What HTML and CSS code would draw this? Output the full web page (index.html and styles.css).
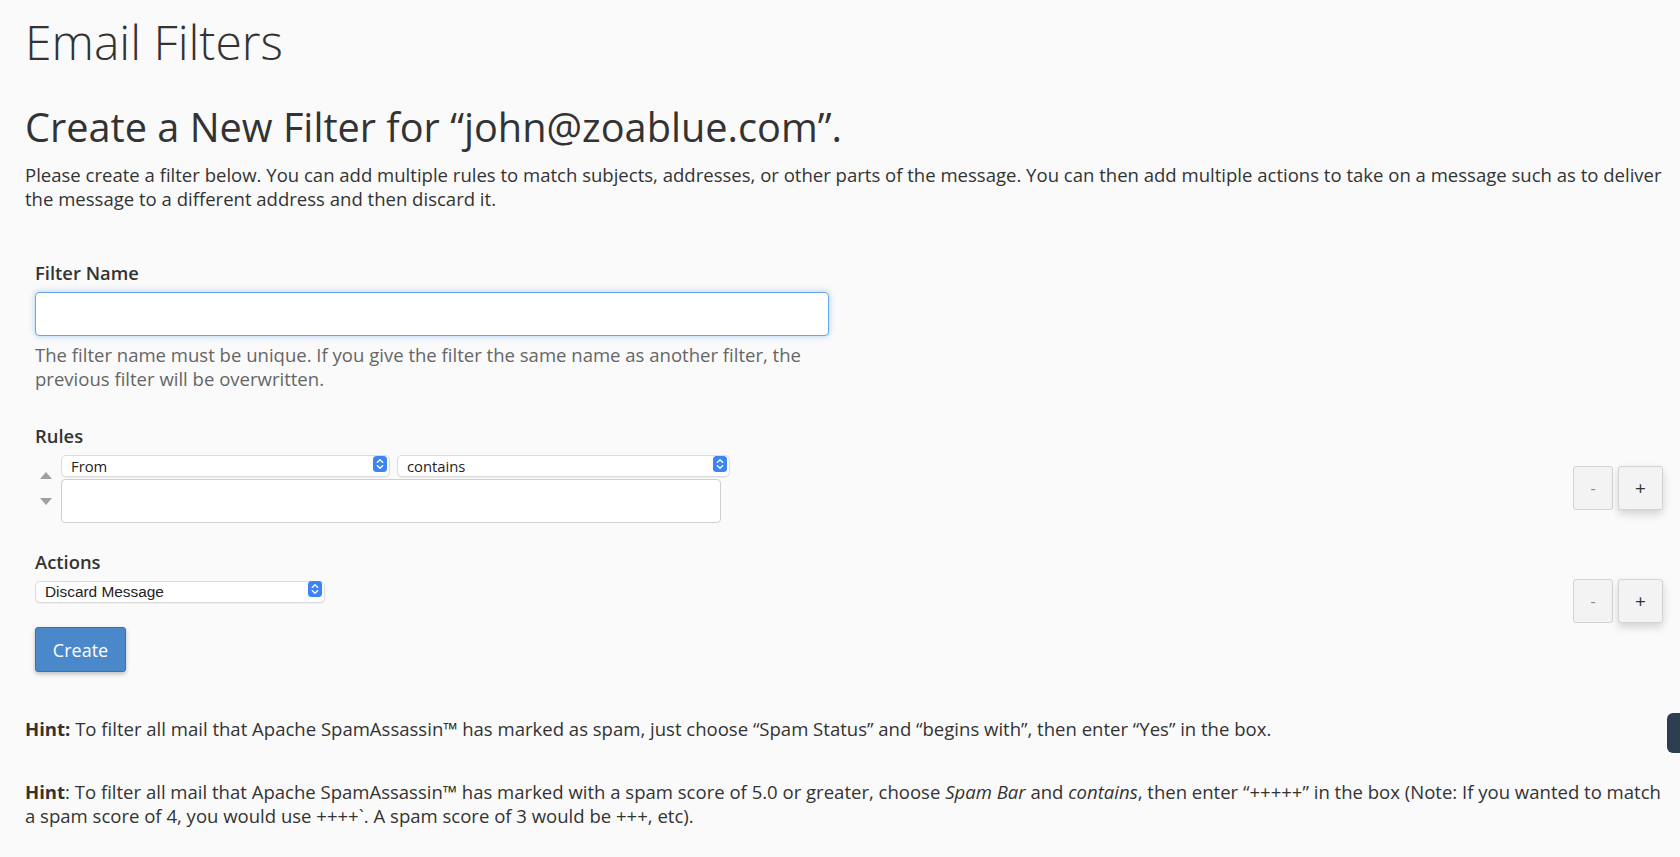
FILE: index.html
```html
<!DOCTYPE html>
<html lang="en">
<head>
<meta charset="utf-8">
<title>Email Filters</title>
<link rel="stylesheet" href="styles.css">
</head>
<body>
<div class="page">
  <h1 class="page-title">Email Filters</h1>
  <h2 class="sub-title">Create a New Filter for “john@zoablue.com”.</h2>
  <p class="intro">Please create a filter below. You can add multiple rules to match subjects, addresses, or other parts of the message. You can then add multiple actions to take on a message such as to deliver the message to a different address and then discard it.</p>

  <form class="filter-form">
    <div class="field name-field">
      <label class="field-label" for="filtername">Filter Name</label>
      <input class="text-input" id="filtername" type="text">
      <p class="help">The filter name must be unique. If you give the filter the same name as another filter, the previous filter will be overwritten.</p>
    </div>

    <div class="field rules-field">
      <div class="field-label">Rules</div>
      <div class="rule-row">
        <div class="move">
          <span class="tri up"></span>
          <span class="tri down"></span>
        </div>
        <div class="rule-body">
          <div class="rule-selects">
            <div class="select sel-part">
              <select><option>From</option></select>
              <span class="stepper"><svg viewBox="0 0 14 16" width="14" height="16"><rect width="14" height="16" rx="3.5" fill="#3c84f4"/><path d="M4.2 6.4 7 3.8l2.8 2.6M4.2 9.6 7 12.2l2.8-2.6" fill="none" stroke="#fff" stroke-width="1.3" stroke-linecap="round" stroke-linejoin="round"/></svg></span>
            </div>
            <div class="select sel-match">
              <select><option>contains</option></select>
              <span class="stepper"><svg viewBox="0 0 14 16" width="14" height="16"><rect width="14" height="16" rx="3.5" fill="#3c84f4"/><path d="M4.2 6.4 7 3.8l2.8 2.6M4.2 9.6 7 12.2l2.8-2.6" fill="none" stroke="#fff" stroke-width="1.3" stroke-linecap="round" stroke-linejoin="round"/></svg></span>
            </div>
          </div>
          <textarea class="rule-value"></textarea>
        </div>
        <div class="pm">
          <button type="button" class="pm-btn minus">-</button>
          <button type="button" class="pm-btn plus">+</button>
        </div>
      </div>
    </div>

    <div class="field actions-field">
      <div class="field-label">Actions</div>
      <div class="action-row">
        <div class="select sel-action">
          <select><option>Discard Message</option></select>
          <span class="stepper"><svg viewBox="0 0 14 16" width="14" height="16"><rect width="14" height="16" rx="3.5" fill="#3c84f4"/><path d="M4.2 6.4 7 3.8l2.8 2.6M4.2 9.6 7 12.2l2.8-2.6" fill="none" stroke="#fff" stroke-width="1.3" stroke-linecap="round" stroke-linejoin="round"/></svg></span>
        </div>
        <div class="pm pm-action">
          <button type="button" class="pm-btn minus">-</button>
          <button type="button" class="pm-btn plus">+</button>
        </div>
      </div>
    </div>

    <button type="button" class="create-btn">Create</button>
  </form>

  <p class="hint hint-1"><strong>Hint:</strong> To filter all mail that Apache SpamAssassin™ has marked as spam, just choose “Spam Status” and “begins with”, then enter “Yes” in the box.</p>
  <p class="hint hint-2"><strong>Hint</strong>: To filter all mail that Apache SpamAssassin™ has marked with a spam score of 5.0 or greater, choose <em>Spam Bar</em> and <em>contains</em>, then enter “+++++” in the box (Note: If you wanted to match a spam score of 4, you would use ++++`. A spam score of 3 would be +++, etc).</p>
</div>
<div class="side-tab"></div>
</body>
</html>
```

FILE: styles.css
```css
* { box-sizing: border-box; }

html, body {
  margin: 0;
  padding: 0;
  background: #fafafa;
}

body {
  font-family: "Open Sans", "Liberation Sans", sans-serif;
  font-size: 18.55px;
  line-height: 24px;
  color: #333;
  overflow: hidden;
  position: relative;
  min-height: 857px;
}

.page {
  padding: 0 17px 0 25px;
}

.page-title {
  margin: 15px 0 0;
  font-size: 48px;
  line-height: 53px;
  font-weight: 300;
  color: #333;
}

.sub-title {
  margin: 37px 0 0;
  font-size: 39.7px;
  line-height: 44px;
  font-weight: 400;
  color: #333;
}

.intro {
  margin: 14px 0 0;
}

.filter-form {
  padding-left: 10px;
}

.field-label {
  display: block;
  font-weight: 600;
  font-size: 18.4px;
  line-height: 24px;
}

.name-field {
  margin-top: 50px;
  width: 794px;
}

.text-input {
  display: block;
  margin-top: 7px;
  width: 794px;
  height: 44px;
  border: 1px solid #66a7ee;
  border-radius: 4px;
  background: #fff;
  box-shadow: 0 0 6px rgba(102, 170, 238, 0.55);
  outline: none;
  font: inherit;
}

.help {
  margin: 7px 0 0;
  color: #666;
}

.rules-field {
  margin-top: 33px;
}

.rule-row {
  margin-top: 5px;
  display: flex;
  align-items: center;
}

.move {
  width: 26px;
  display: flex;
  flex-direction: column;
  align-items: center;
  gap: 19px;
  padding-right: 4px;
}

.tri {
  width: 0;
  height: 0;
  border-left: 6px solid transparent;
  border-right: 6px solid transparent;
}
.tri.up { border-bottom: 7px solid #a0a0a0; }
.tri.down { border-top: 7px solid #a0a0a0; }

.rule-body {
  display: flex;
  flex-direction: column;
  gap: 4px;
}

.rule-selects {
  display: flex;
  gap: 7px;
}

.select {
  position: relative;
  height: 22px;
}

.select select {
  -webkit-appearance: none;
  appearance: none;
  width: 100%;
  height: 22px;
  margin: 0;
  padding: 0 24px 0 9px;
  border: 1px solid #dcdcdc;
  border-radius: 5px;
  background: #fff;
  box-shadow: 0 1px 1px rgba(0, 0, 0, 0.06);
  font-family: "Open Sans", "Liberation Sans", sans-serif;
  font-size: 14.8px;
  line-height: 20px;
  color: #222;
}

.stepper {
  position: absolute;
  right: 3px;
  top: 3px;
  width: 14px;
  height: 16px;
  pointer-events: none;
  display: flex;
}

.sel-part { width: 329px; }
.sel-match { width: 333px; }

.rule-value {
  display: block;
  width: 660px;
  height: 44px;
  border: 1px solid #cfcfcf;
  border-radius: 4px;
  background: #fff;
  resize: none;
  margin: 0;
}

.pm {
  margin-left: auto;
  display: flex;
  gap: 5px;
}

.pm-btn {
  height: 44px;
  border: 1px solid #d3d3d3;
  border-radius: 3px;
  background: #f3f3f3;
  font-family: "Open Sans", "Liberation Sans", sans-serif;
  font-size: 16px;
  color: #333;
  padding: 0;
}
.pm-btn.minus {
  width: 40px;
  color: #888;
}
.pm-btn.plus {
  width: 45px;
  box-shadow: 0 4px 8px rgba(0, 0, 0, 0.16);
  font-size: 19px;
}

.actions-field {
  margin-top: 27px;
}

.action-row {
  margin-top: 4px;
  display: flex;
  align-items: flex-start;
}

.sel-action {
  width: 290px;
}
.sel-action select {
  font-family: "Liberation Sans", Arial, sans-serif;
  font-size: 15.4px;
}

.pm-action {
  margin-top: 1px;
}

.create-btn {
  display: block;
  margin-top: 4px;
  width: 91px;
  height: 45px;
  border: 1px solid #3b70a8;
  border-radius: 3px;
  background: #4a88c9;
  color: #fff;
  font-family: "Open Sans", "Liberation Sans", sans-serif;
  font-size: 18px;
  box-shadow: 0 2px 4px rgba(0, 0, 0, 0.25);
  padding: 0;
}

.hint {
  margin: 0;
}
.hint-1 { margin-top: 45px; }
.hint-2 { margin-top: 39px; }
.hint strong { font-weight: 700; }

.side-tab {
  position: absolute;
  left: 1667px;
  top: 713px;
  width: 30px;
  height: 40px;
  background: #2c3e50;
  border-radius: 6px;
}
```
